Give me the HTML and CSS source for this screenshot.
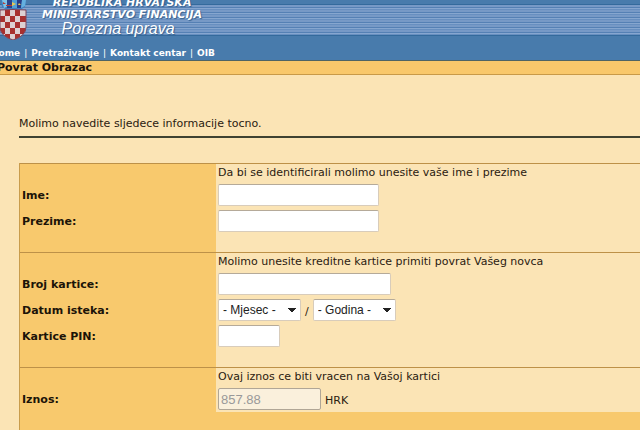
FILE: index.html
```html
<!DOCTYPE html>
<html lang="hr">
<head>
<meta charset="utf-8">
<title>Povrat Obrazac</title>
<link rel="stylesheet" href="styles.css">
</head>
<body>
<header class="header">
  <div class="brand">
    <svg class="crest" viewBox="0 0 30 40" aria-hidden="true">
      <path d="M3 0h25l-1 7-5 3H9L4 7z" fill="#3e7fc0"/>
      <path d="M4 0h5l1 6-4 2z" fill="#7fc4e8"/>
      <path d="M9 0h5v8H9z" fill="#29448c"/>
      <path d="M14 0h5v8h-5z" fill="#4f9fd8"/>
      <path d="M19 0h5l-1 8h-4z" fill="#293c84"/>
      <path d="M24 0h4l-1 6-4 2z" fill="#64b0df"/>
      <path d="M14 2l4 2-4 2zM21 3l2 2h-3z" fill="#e6ca55"/>
      <path d="M8 5h6v1H8zM5 2l3 2H5z" fill="#b83b35"/>
      <clipPath id="shield"><path d="M2 10q13-1 26 0v17q0 9-13 13Q2 36 2 27z"/></clipPath>
      <g clip-path="url(#shield)">
        <path d="M2 9h26v31H2z" fill="#ddd0d2"/>
        <path d="M7 10h5v6H7zM17 10h5v6h-5zM2 16h5v6H2zM12 16h5v6h-5zM22 16h6v6h-6zM7 22h5v6H7zM17 22h5v6h-5zM2 28h5v6H2zM12 28h5v6h-5zM22 28h6v6h-6zM7 34h5v6H7zM17 34h5v6h-5z" fill="#a8302f"/>
      </g>
      <path d="M2 10q13-1 26 0v17q0 9-13 13Q2 36 2 27z" fill="none" stroke="#7d4358"/>
    </svg>
    <div class="brand-text">
      <div class="brand-line">REPUBLIKA HRVATSKA</div>
      <div class="brand-line">MINISTARSTVO FINANCIJA</div>
      <div class="brand-name">Porezna uprava</div>
    </div>
  </div>
  <nav class="nav">
    <a href="#">Home</a><span>|</span><a href="#">Pretraživanje</a><span>|</span><a href="#">Kontakt centar</a><span>|</span><a href="#">OIB</a>
  </nav>
</header>
<h1 class="title">Povrat Obrazac</h1>
<main class="content">
  <p class="intro">Molimo navedite sljedece informacije tocno.</p>
  <form class="form">
    <section class="section">
      <p class="hint">Da bi se identificirali molimo unesite vaše ime i prezime</p>
      <div class="row"><label for="ime">Ime:</label><div class="field"><input class="name" id="ime" type="text"></div></div>
      <div class="row"><label for="prezime">Prezime:</label><div class="field"><input class="name" id="prezime" type="text"></div></div>
    </section>
    <section class="section">
      <p class="hint">Molimo unesite kreditne kartice primiti povrat Vašeg novca</p>
      <div class="row"><label for="broj">Broj kartice:</label><div class="field"><input class="card" id="broj" type="text"></div></div>
      <div class="row"><label for="mjesec">Datum isteka:</label><div class="field">
        <select id="mjesec"><option>- Mjesec -</option></select>
        <span>/</span>
        <select id="godina" aria-label="Godina isteka"><option>- Godina -</option></select>
      </div></div>
      <div class="row"><label for="pin">Kartice PIN:</label><div class="field"><input class="pin" id="pin" type="password"></div></div>
    </section>
    <section class="section amount-section">
      <p class="hint">Ovaj iznos ce biti vracen na Vašoj kartici</p>
      <div class="row"><label for="iznos">Iznos:</label><div class="field"><input class="amount" id="iznos" type="text" value="857.88" disabled><span>HRK</span></div></div>
    </section>
  </form>
</main>
</body>
</html>
```
FILE: styles.css
```css
* {
  box-sizing: border-box;
}

html {
  height: 100%;
}

body {
  display: flex;
  flex-direction: column;
  min-height: 100%;
  margin: 0;
  overflow: hidden;
  background: #fbe4b5;
  color: #2a2010;
  font: 11px/16px Verdana, "DejaVu Sans", sans-serif;
}

.header {
  border-bottom: 1px solid #4f6464;
  background:
    linear-gradient(#346a9c, #346a9c) 0 4px / 100% 1px no-repeat,
    linear-gradient(#346a9c, #346a9c) 0 35px / 100% 1px no-repeat,
    repeating-linear-gradient(#7799c6 0 2px, #5580b4 2px 3px, #86a6cf 3px 4px, #688fc0 4px 5px) 0 5px / 100% 30px no-repeat,
    #487bac;
  color: #fff;
}

.brand {
  display: flex;
  align-items: flex-start;
  gap: 14px;
  height: 45px;
  margin-left: -2px;
}

.crest {
  width: 30px;
  height: 40px;
}

.brand-text {
  margin-top: -3px;
  text-align: center;
  text-shadow: 1px 1px 1px #34608f;
}

.brand-line {
  font: italic bold 11px/12px Verdana, "DejaVu Sans", sans-serif;
}

.brand-name {
  margin-right: 8px;
  font: italic 16px/16px "Liberation Sans", Arial, sans-serif;
}

.nav {
  display: flex;
  gap: 4px;
  height: 15px;
  margin-left: -9px;
  font: bold 9px/16px Verdana, "DejaVu Sans", sans-serif;
}

.nav span {
  font-weight: normal;
}

.nav a {
  color: #fff;
  text-decoration: none;
}

.title {
  margin: 0;
  border-bottom: 1px solid #c99a48;
  background: #f9c86b;
  color: #1c1408;
  font-size: 11px;
  line-height: 13px;
  text-indent: -3px;
}

.content {
  display: flex;
  flex: 1;
  flex-direction: column;
  padding: 41px 0 0 19px;
}

.intro {
  margin: 0 0 25px;
  padding-bottom: 4px;
  border-bottom: 2px solid #3f4232;
}

.form {
  flex: 1;
  border-left: 1px solid #c99c4c;
  background: #f8c96d;
}

.section {
  padding-bottom: 18px;
  border-top: 1px solid #bd9148;
  background: linear-gradient(to right, #f8c96d 196px, #fbe4b5 196px);
}

.amount-section {
  padding-bottom: 0;
}

.hint {
  margin: 0 0 0 198px;
  line-height: 18px;
}

.row {
  display: grid;
  grid-template-columns: 196px 1fr;
  align-items: center;
  height: 26px;
}

.row label {
  padding: 1px 0 0 2px;
  color: #1c1408;
  font-weight: bold;
}

.field {
  display: flex;
  align-items: center;
  gap: 4px;
  padding-left: 2px;
}

.field span {
  padding-top: 4px;
}

input,
select {
  height: 22px;
  margin: 0;
  padding: 0 3px;
  border: 1px solid #d8ccbb;
  border-top-color: #b5aa99;
  border-radius: 2px;
  background: #fff;
  color: #222;
  font: 12px "Liberation Sans", Arial, sans-serif;
}

select {
  width: 83px;
  padding: 0 16px 0 4px;
  appearance: none;
  background:
    conic-gradient(from -39deg at 50% 100%, #222 78deg, transparent 78deg) right 4px center / 8px 5px no-repeat,
    #fff;
}

.name {
  width: 161px;
}

.card {
  width: 173px;
}

.pin {
  width: 62px;
}

.amount {
  width: 103px;
  padding: 0 2px;
  border-color: #b0a696;
  background: #faf0dc;
  color: #999;
  font-size: 13px;
}
```
